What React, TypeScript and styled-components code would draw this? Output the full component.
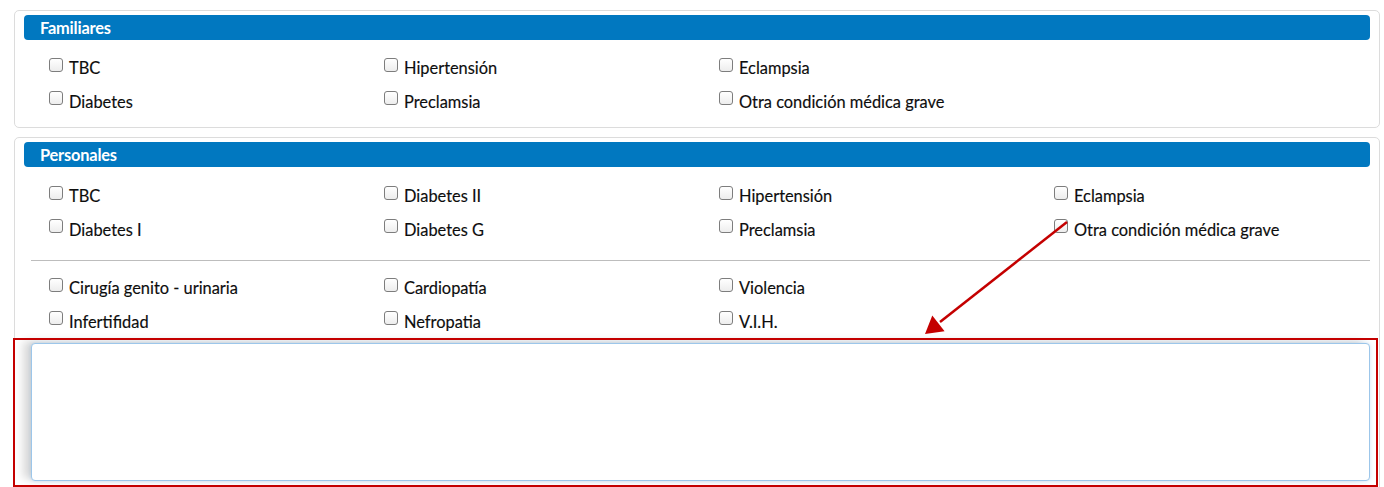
import React from "react";
import styled, { createGlobalStyle } from "styled-components";

const Global = createGlobalStyle`
  html, body { margin: 0; padding: 0; background: #ffffff; }
  body { font-family: Lato, "Open Sans", Arial, sans-serif; color: #111; }
  * { box-sizing: border-box; }
`;

const Page = styled.div`
  position: relative;
  width: 1384px;
  height: 487px;
  overflow: hidden;
  padding: 10px 4px 0 14px;
  display: flex;
  flex-direction: column;
  gap: 9px;
`;

const Panel = styled.section<{ $open?: boolean }>`
  border: 1px solid #dcdcdc;
  border-radius: 5px;
  padding: 4px 9px ${(p) => (p.$open ? "20px" : "9px")} 9px;
  display: flex;
  flex-direction: column;
`;

const Header = styled.div`
  height: 25px;
  background: #0178c0;
  border-radius: 4px;
  color: #fff;
  font-weight: 700;
  font-size: 16.4px;
  line-height: 25px;
  padding-left: 16px;
  letter-spacing: -0.2px;
`;

const Grid = styled.div<{ $top: number }>`
  display: grid;
  grid-template-columns: repeat(4, 335px);
  grid-auto-rows: 33.5px;
  padding-left: 25px;
  margin-top: ${(p) => p.$top}px;
`;

const Item = styled.label`
  display: flex;
  align-items: center;
  gap: 6px;
  font-size: 16.4px;
  color: #0d0d0d;
  white-space: nowrap;
  -webkit-text-stroke: 0.15px #0d0d0d;
`;

const Box = styled.input.attrs({ type: "checkbox" })`
  appearance: none;
  -webkit-appearance: none;
  width: 14px;
  height: 14px;
  margin: 0;
  position: relative;
  top: -3px;
  border: 1px solid #7d7d7d;
  border-radius: 3px;
  background: linear-gradient(#ffffff, #ededed);
  flex: none;
`;

const Divider = styled.hr`
  border: none;
  border-top: 1px solid #bdbdbd;
  margin: 14px 0 10px 7px;
  height: 0;
`;

const Notes = styled.textarea`
  margin: 5px 0 0 7px;
  height: 138px;
  border: 1px solid #9cc6ea;
  border-radius: 4px;
  resize: none;
  background: #fff;
  box-shadow: -8px -2px 8px rgba(0, 0, 0, 0.15), 0 0 4px rgba(120, 175, 225, 0.35);
`;

const Highlight = styled.div`
  position: absolute;
  left: 13px;
  top: 338px;
  width: 1365px;
  height: 149px;
  border: 2px solid #c40000;
  pointer-events: none;
`;

const Overlay = styled.svg`
  position: absolute;
  left: 0;
  top: 0;
  pointer-events: none;
`;

type Row = string[];

const Checks = ({ items, top }: { items: Row; top: number }) => (
  <Grid $top={top}>
    {items.map((t, i) =>
      t ? (
        <Item key={i}>
          <Box />
          {t}
        </Item>
      ) : (
        <span key={i} />
      )
    )}
  </Grid>
);

export default function App() {
  return (
    <>
      <Global />
      <Page>
        <Panel>
          <Header>Familiares</Header>
          <Checks
            top={11}
            items={["TBC", "Hipertensión", "Eclampsia", "", "Diabetes", "Preclamsia", "Otra condición médica grave", ""]}
          />
        </Panel>
        <Panel $open>
          <Header>Personales</Header>
          <Checks
            top={12}
            items={[
              "TBC",
              "Diabetes II",
              "Hipertensión",
              "Eclampsia",
              "Diabetes I",
              "Diabetes G",
              "Preclamsia",
              "Otra condición médica grave",
            ]}
          />
          <Divider />
          <Checks
            top={0}
            items={["Cirugía genito - urinaria", "Cardiopatía", "Violencia", "", "Infertifidad", "Nefropatia", "V.I.H.", ""]}
          />
          <Notes />
        </Panel>
        <Highlight />
        <Overlay width="1384" height="487" viewBox="0 0 1384 487">
          <line x1="1067" y1="222" x2="940" y2="322" stroke="#c40000" strokeWidth="2.5" />
          <polygon points="925,334 932.3,315.6 944.6,331.3" fill="#c40000" />
        </Overlay>
      </Page>
    </>
  );
}
